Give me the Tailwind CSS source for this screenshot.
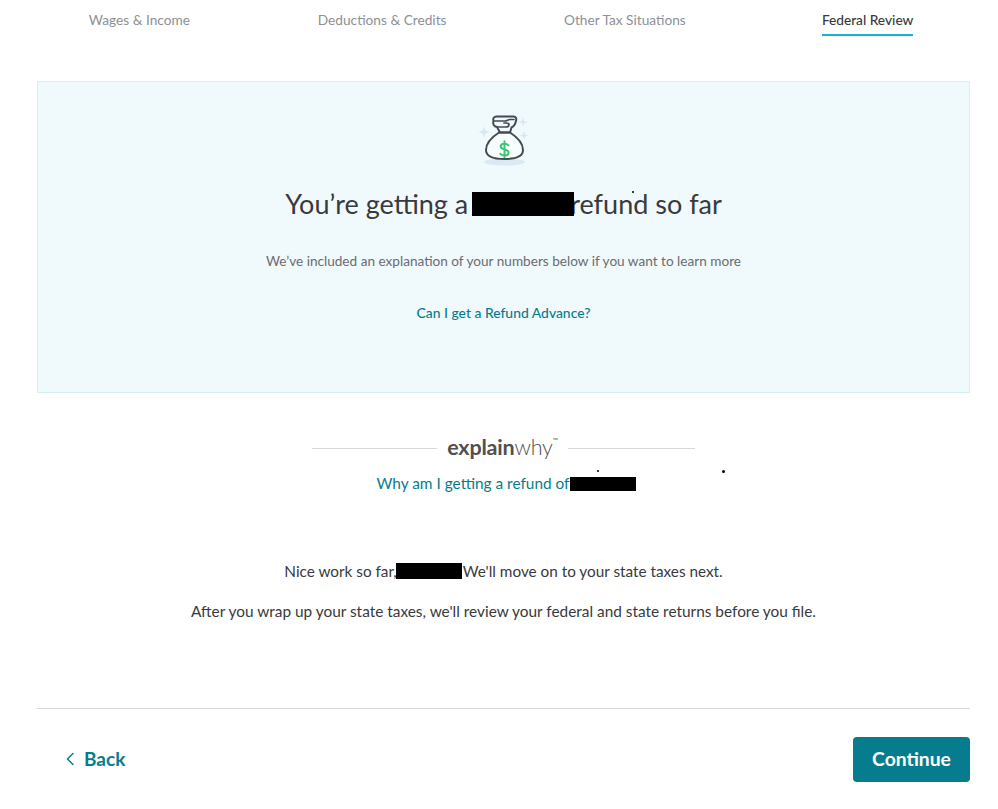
<!DOCTYPE html>
<html>
<head>
<meta charset="utf-8">
<script src="https://cdn.jsdelivr.net/npm/@tailwindcss/browser@4"></script>
</head>
<body class="bg-white font-['Lato','Noto_Sans',sans-serif] text-[#393a3d]">
<div class="relative h-[809px] w-[998px] overflow-hidden">
  <nav class="grid h-[36px] grid-cols-4 pl-[18px] pr-[9px] text-[13.7px] text-[#8d9096]">
    <div class="flex justify-center"><span class="pt-[10px]">Wages &amp; Income</span></div>
    <div class="flex justify-center"><span class="pt-[10px]">Deductions &amp; Credits</span></div>
    <div class="flex justify-center"><span class="pt-[10px]">Other Tax Situations</span></div>
    <div class="flex justify-center"><span class="h-[36px] border-b-2 border-[#14b4d2] pt-[10px] font-medium text-[#393a3d]">Federal Review</span></div>
  </nav>

  <main class="ml-[37px] w-[933px]">
    <section class="mt-[45px] flex h-[312px] flex-col items-center border border-[#d5eff3] bg-[#f0f9fb]">
      <svg class="mt-[30px]" width="52" height="56" viewBox="478 112 52 56" fill="none">
        <ellipse cx="504.500" cy="162" rx="20.500" ry="3.500" fill="#dbe9f3"/>
        <path d="M484 126.500l1.400 4.100 4.100 1.400-4.100 1.400-1.400 4.100-1.400-4.100-4.100-1.400 4.100-1.400z" fill="#d6e8f2"/>
        <path d="M523 117.500l1.100 3.400 3.400 1.100-3.400 1.100-1.100 3.400-1.100-3.400-3.400-1.100 3.400-1.100z" fill="#d6e8f2"/>
        <path d="M524 131l1.100 3.400 3.400 1.100-3.400 1.100-1.100 3.400-1.100-3.400-3.400-1.100 3.400-1.100z" fill="#d6e8f2"/>
        <path d="M499 132.500c-7 4.500-13 10.500-13 17.500 0 7 7 9 18.500 9s18.500-2 18.500-9c0-7-6-13-13-17.500z" fill="#f7fcfd" stroke="#454b53" stroke-width="2" stroke-linejoin="round"/>
        <path d="M499 132.500h11M500 132.500l-3-5.500c-3-.5-4.500-3-3.500-6-.8-2.500 .5-4.500 3-4.500h17c2.500 0 3.200 2 2.500 4.500-.7 3-2.500 5.500-4.500 6.500l-1.500 5" stroke="#454b53" stroke-width="2" stroke-linecap="round" stroke-linejoin="round"/>
        <path d="M494 121h11c2 0 3-1.500 5-1.500h4M497 127h9c2 0 3-1 3-2.500 0-1-1-1.500-3-1.500h-2" stroke="#454b53" stroke-width="1.700" stroke-linecap="round" stroke-linejoin="round"/>
        <path d="M508.500 145.300c-.8-1-2.200-1.600-4-1.600-2.300 0-3.800 1.100-3.800 2.800 0 1.800 1.500 2.400 3.900 2.900 2.400.5 4 1.300 4 3.200 0 1.800-1.600 2.900-4 2.900-1.900 0-3.300-.6-4.300-1.700M504.500 141.300v16" stroke="#3fc672" stroke-width="2" stroke-linecap="round"/>
      </svg>
      <h1 class="mt-[18px] flex h-[36px] items-center text-[27px] leading-[36px] text-[#393a3d]">You’re getting a<span class="relative ml-[4px] mr-[-4px] inline-block h-[24px] w-[102px] bg-black"></span>refund so far</h1>
      <p class="mt-[29px] text-[13.6px] leading-[20px] text-[#6b6c72]">We’ve included an explanation of your numbers below if you want to learn more</p>
      <a class="mt-[32px] text-[13.9px] leading-[20px] font-medium text-[#077c8e]">Can I get a Refund Advance?</a>
    </section>

    <div class="mt-[41px] flex items-center justify-center">
      <div class="mt-[2px] h-px w-[125px] bg-[#d9d9d9]"></div>
      <div class="flex h-[26px] w-[131px] items-center justify-center text-[21.500px] leading-[26px] tracking-[-0.2px] text-[#4f5052]"><span class="font-bold">explain</span><span class="font-light">why</span><span class="mb-[14px] text-[7px] leading-none">™</span></div>
      <div class="mt-[2px] h-px w-[127px] bg-[#d9d9d9]"></div>
    </div>
    <p class="mt-[11px] flex h-[24px] items-center justify-center pl-[5px] text-[15.400px] leading-[24px] text-[#077c8e]">Why am I getting a refund of<span class="mt-[1px] inline-block h-[14px] w-[66px] bg-black"></span></p>

    <p class="mt-[64px] flex h-[24px] items-center justify-center text-[15.300px] leading-[24px]">Nice work so far,<span class="ml-[-1px] mr-[1px] inline-block h-[16px] w-[66px] bg-black"></span>We'll move on to your state taxes next.</p>
    <p class="mt-[16px] text-center text-[15.400px] leading-[24px]">After you wrap up your state taxes, we'll review your federal and state returns before you file.</p>

    <footer class="mt-[85px] flex h-[100px] items-center justify-between border-t border-[#d9d9d9] pt-[1px]">
      <a class="ml-[29px] flex items-center gap-[10px] text-[19px] font-bold text-[#077c8e]">
        <svg width="8" height="14" viewBox="0 0 8 14" fill="none"><path d="M7 1.500L1.500 7 7 12.500" stroke="#077c8e" stroke-width="1.500" stroke-linecap="round" stroke-linejoin="round"/></svg>
        Back
      </a>
      <button class="flex h-[45px] w-[117px] items-center justify-center rounded-[4px] bg-[#077c8e] text-[19.300px] font-bold text-white">Continue</button>
    </footer>
  </main>

  <i class="absolute left-[597px] top-[470px] h-[2px] w-[2px] rounded-full bg-black"></i>
  <i class="absolute left-[722px] top-[470px] h-[3px] w-[3px] rounded-full bg-black"></i>
  <i class="absolute left-[632px] top-[191px] h-[2px] w-[2px] rounded-full bg-black"></i>
</div>
</body>
</html>
